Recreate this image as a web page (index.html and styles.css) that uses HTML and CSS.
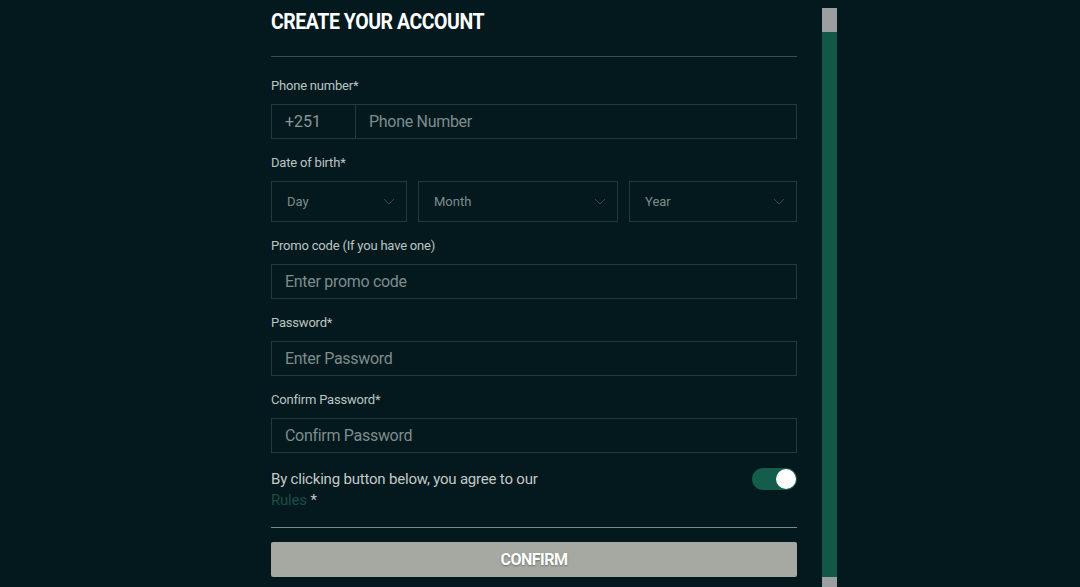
FILE: index.html
```html
<!DOCTYPE html>
<html>
<head>
<meta charset="utf-8">
<link rel="stylesheet" href="styles.css">
</head>
<body>
<div class="page">
  <main class="form">
    <h1 class="title">CREATE YOUR ACCOUNT</h1>
    <div class="rule top-rule"></div>

    <label class="label">Phone number*</label>
    <div class="box phone">
      <span class="prefix">+251</span>
      <span class="ph">Phone Number</span>
    </div>

    <label class="label">Date of birth*</label>
    <div class="dob">
      <div class="box select day"><span>Day</span><svg class="chev" viewBox="0 0 12 7" width="12" height="7"><path d="M1 1l5 5 5-5" fill="none" stroke="#2f4c4e" stroke-width="1"/></svg></div>
      <div class="box select month"><span>Month</span><svg class="chev" viewBox="0 0 12 7" width="12" height="7"><path d="M1 1l5 5 5-5" fill="none" stroke="#2f4c4e" stroke-width="1"/></svg></div>
      <div class="box select year"><span>Year</span><svg class="chev" viewBox="0 0 12 7" width="12" height="7"><path d="M1 1l5 5 5-5" fill="none" stroke="#2f4c4e" stroke-width="1"/></svg></div>
    </div>

    <label class="label">Promo code (If you have one)</label>
    <div class="box input"><span class="ph">Enter promo code</span></div>

    <label class="label">Password*</label>
    <div class="box input"><span class="ph">Enter Password</span></div>

    <label class="label">Confirm Password*</label>
    <div class="box input"><span class="ph">Confirm Password</span></div>

    <div class="agree">
      <div class="agree-text">
        <div>By clicking button below, you agree to our</div>
        <div><span class="rules">Rules</span> *</div>
      </div>
      <div class="toggle"><span class="knob"></span></div>
    </div>

    <div class="rule bottom-rule"></div>
    <button class="confirm">CONFIRM</button>
  </main>
  <div class="scrollbar">
    <div class="thumb"></div>
    <div class="track"></div>
    <div class="end"></div>
  </div>
</div>
</body>
</html>
```

FILE: styles.css
```css
html, body {
  margin: 0;
  padding: 0;
  background: #03191d;
  height: 100%;
  overflow: hidden;
}
body {
  font-family: Roboto, "Liberation Sans", sans-serif;
  color: #c3c9c9;
}
.page {
  display: flex;
  align-items: stretch;
  gap: 25px;
  margin-left: 271px;
  height: 587px;
}
.form {
  width: 526px;
  display: flex;
  flex-direction: column;
}
.title {
  margin: 9px 0 0;
  font-size: 22px;
  line-height: 26px;
  font-weight: 700;
  color: #ffffff;
  letter-spacing: -0.5px;
  transform: scaleX(0.885);
  transform-origin: left center;
  white-space: nowrap;
}
.rule {
  height: 1px;
  background: #35504f;
}
.top-rule {
  margin-top: 21px;
}
.label {
  display: block;
  font-size: 13px;
  line-height: 16px;
  color: #bcc4c4;
  letter-spacing: -0.2px;
  margin-top: 16px;
  margin-bottom: 10px;
}
.top-rule + .label {
  margin-top: 21px;
}
.box {
  border: 1px solid #1f3b3e;
  box-sizing: border-box;
  display: flex;
  align-items: center;
}
.ph {
  font-size: 16px;
  color: #7e8c8c;
  letter-spacing: -0.3px;
}
.phone {
  height: 35px;
}
.prefix {
  width: 84px;
  height: 100%;
  box-sizing: border-box;
  border-right: 1px solid #1f3b3e;
  display: flex;
  align-items: center;
  padding-left: 13px;
  font-size: 16px;
  color: #8a9696;
}
.phone .ph {
  padding-left: 13px;
}
.input {
  height: 35px;
  padding-left: 13px;
}
.dob {
  display: flex;
  gap: 11px;
}
.select {
  height: 41px;
  justify-content: space-between;
  padding: 0 11px 0 15px;
  font-size: 13px;
  color: #7e8c8c;
}
.day { width: 136px; }
.month { width: 200px; }
.year { flex: 1; }
.chev {
  display: block;
}
.agree {
  margin-top: 16px;
  display: flex;
  justify-content: space-between;
  align-items: flex-start;
}
.agree-text {
  font-size: 15px;
  line-height: 21px;
  color: #c3c9c9;
  letter-spacing: -0.2px;
}
.rules {
  color: #1d4d43;
}
.toggle {
  width: 45px;
  height: 22px;
  border-radius: 11px;
  background: #145c4c;
  position: relative;
  margin-top: -1px;
}
.knob {
  position: absolute;
  right: 1px;
  top: 1px;
  width: 20px;
  height: 20px;
  border-radius: 50%;
  background: #ffffff;
}
.bottom-rule {
  margin-top: 16px;
  background: #7b8a89;
}
.confirm {
  margin-top: 14px;
  height: 35px;
  border: none;
  border-radius: 2px;
  background: #a6a8a2;
  color: #ffffff;
  font-family: Roboto, "Liberation Sans", sans-serif;
  font-weight: 700;
  font-size: 16px;
  letter-spacing: -0.5px;
  text-shadow: 0 1px 2px rgba(0,0,0,0.35);
  padding: 0;
}
.scrollbar {
  width: 15px;
  margin-top: 8px;
  display: flex;
  flex-direction: column;
}
.thumb {
  height: 24px;
  background: #9b9fa1;
}
.track {
  flex: 1;
  background: #135746;
}
.end {
  height: 10px;
  background: #9b9fa1;
}
```
